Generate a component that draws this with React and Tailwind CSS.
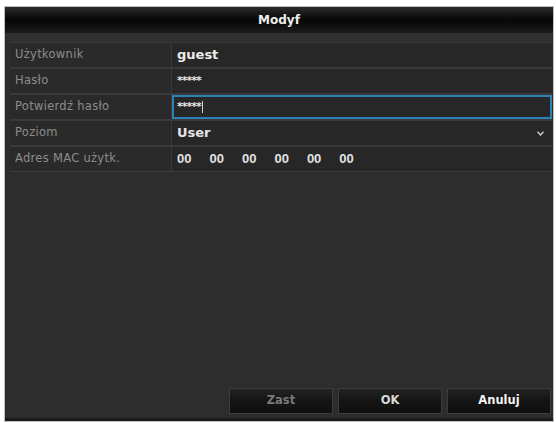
import React from "react";

const rows = [
  { label: "Użytkownik", value: "guest", kind: "text" },
  { label: "Hasło", value: "*****", kind: "pass" },
  { label: "Potwierdź hasło", value: "*****", kind: "focus" },
  { label: "Poziom", value: "User", kind: "select" },
  { label: "Adres MAC użytk.", value: "", kind: "mac" },
];

function Value({ row }) {
  if (row.kind === "mac") {
    return (
      <div
        className="flex h-full items-center gap-[18px] pl-[5px] text-[13px] font-bold text-[#e2e2e2]"
        style={{ fontFamily: '"Liberation Sans", Arial, sans-serif' }}
      >
        {["00", "00", "00", "00", "00", "00"].map((v, i) => (
          <span key={i}>{v}</span>
        ))}
      </div>
    );
  }
  if (row.kind === "focus") {
    return (
      <div className="flex h-full items-center border-2 border-[#2c82b4] pl-[3px] text-[11px] font-bold text-[#e6e6e6]">
        <span className="tracking-[-1px]">{row.value}</span>
        <span className="ml-[1px] h-[12px] w-px bg-[#d0d0d0]" />
      </div>
    );
  }
  if (row.kind === "select") {
    return (
      <div className="flex h-full items-center justify-between pl-[5px] pr-[8px] text-[13px] font-bold text-[#e6e6e6]">
        <span>{row.value}</span>
        <svg width="7" height="5" viewBox="0 0 7 5">
          <path d="M0.5 0.8 L3.5 4 L6.5 0.8" fill="none" stroke="#cfcfcf" strokeWidth="1.4" />
        </svg>
      </div>
    );
  }
  if (row.kind === "pass") {
    return (
      <div className="flex h-full items-center pl-[5px] text-[11px] font-bold tracking-[-1px] text-[#e6e6e6]">
        {row.value}
      </div>
    );
  }
  return (
    <div className="flex h-full items-center pl-[5px] text-[13px] font-bold text-[#ececec]">
      {row.value}
    </div>
  );
}

function Button({ children, tone }) {
  return (
    <button className={`h-[26px] w-[104px] border border-[#3c3c3c] bg-gradient-to-b from-[#232323] via-[#141414] to-[#101010] text-[11.5px] font-bold ${tone}`}>
      {children}
    </button>
  );
}

export default function App() {
  return (
    <div
      className="h-[423px] w-[556px] bg-white pl-[4px] pt-[6px]"
      style={{ fontFamily: '"DejaVu Sans", "Liberation Sans", sans-serif' }}
    >
      <div className="flex h-[416px] w-[550px] flex-col border border-[#bdbdbd] bg-[#2d2d2d]">
        {/* title bar */}
        <div className="flex h-[26px] items-center justify-center bg-gradient-to-b from-[#2c2c2c] via-[#070707] to-[#1c1c1c] text-[12px] font-bold text-[#f0f0f0]">
          Modyf
        </div>
        <div className="h-[9px] bg-[#303030]" />

        {/* form table */}
        <div className="ml-[5px] mr-[1px] flex flex-col gap-[2px] bg-[#3a3a3a] py-px">
          {rows.map((r) => (
            <div key={r.label} className="flex h-[24px] gap-px">
              <div className="flex w-[161px] items-center bg-[#2a2a2a] pl-[5px] text-[11.5px] tracking-[0.3px] text-[#8c8c8c]">
                {r.label}
              </div>
              <div className="flex-1 bg-[#272727]">
                <Value row={r} />
              </div>
            </div>
          ))}
        </div>

        <div className="flex-1" />

        {/* buttons */}
        <div className="flex justify-end gap-[5px] pb-[4px] pr-[2px]">
          <Button tone="text-[#7a7a7a]">Zast</Button>
          <Button tone="text-[#d8d8d8]">OK</Button>
          <Button tone="text-[#f4f4f4]">Anuluj</Button>
        </div>
        <div className="h-[3px] bg-[#1a1a1a]" />
      </div>
    </div>
  );
}
